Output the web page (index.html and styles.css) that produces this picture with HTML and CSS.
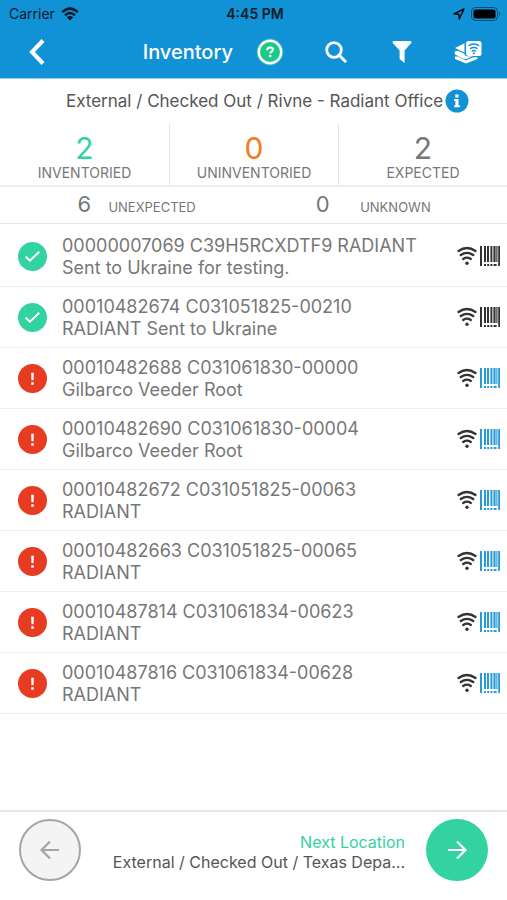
FILE: index.html
```html
<!DOCTYPE html>
<html lang="en">
<head>
<meta charset="utf-8">
<meta name="viewport" content="width=device-width, initial-scale=1">
<title>Inventory</title>
<link rel="stylesheet" href="styles.css">
</head>
<body>
<svg class="sprite" aria-hidden="true">
  <symbol id="signal" viewBox="0 0 20 20">
    <path d="M1.500 4.900Q10 -.8 18.500 4.900M3.800 9Q10 4.800 16.200 9M6.200 12.900Q10 10.400 13.800 12.900" fill="none" stroke="currentColor" stroke-width="2.400" stroke-linecap="round"/>
    <circle cx="10" cy="17.200" r="1.700" fill="currentColor"/>
  </symbol>
  <symbol id="barcode" viewBox="0 0 20 20">
    <path d="M0 0h2v20H0zM4 0h2v16H4zM7 0h2v16H7zM10.400 0h2v16h-2zM13.400 0h2.200v16h-2.200zM16.300 0h1.200v16h-1.200zM18.200 0H20v20h-1.800zM4 18h2v2H4zM7.200 18h2v2h-2zM10.400 18h2v2h-2zM13.600 18h3v2h-3z" fill="currentColor"/>
  </symbol>
  <symbol id="check" viewBox="0 0 28 28">
    <circle cx="14" cy="14" r="14" fill="#32d3a0"/>
    <path d="M7.500 14.200l4 3.800 9-8.600" fill="none" stroke="#fff" stroke-width="2"/>
  </symbol>
  <symbol id="alert" viewBox="0 0 28 28">
    <circle cx="14" cy="14" r="14" fill="#e73c22"/>
    <path d="M12.700 8.400h2.600l-.3 7.400h-2zM12.800 17.600h2.400v2.400h-2.400z" fill="#fff"/>
  </symbol>
</svg>

<header class="header">
  <div class="status">
    <span class="carrier">Carrier
      <svg width="18" height="14" viewBox="0 0 18 14"><path d="M1.2 5.2Q9 -2 16.8 5.2M4 8.2Q9 3.8 14 8.2" fill="none" stroke="currentColor" stroke-width="2.5"/><path d="M5.8 10.2Q9 7.6 12.2 10.2L9 13.4z" fill="currentColor"/></svg>
    </span>
    <span class="clock">4:45 PM</span>
    <span class="device">
      <svg width="12" height="12" viewBox="0 0 12 12"><path d="M1 5.8L11 1 6.3 11 5.8 6.2z" fill="none" stroke="currentColor" stroke-width="1.4" stroke-linejoin="round"/></svg>
      <svg width="30" height="14" viewBox="0 0 30 14"><rect x=".5" y=".5" width="26" height="13" rx="4" fill="none" stroke="currentColor" opacity=".45"/><rect x="2.5" y="2.5" width="22" height="9" rx="2" fill="currentColor"/><path d="M28 4.8q2 2.2 0 4.4z" fill="currentColor" opacity=".45"/></svg>
    </span>
  </div>
  <nav class="nav">
    <button class="nav-button" aria-label="Back"><svg width="16" height="26" viewBox="0 0 16 26"><path d="M14 1.5L3 13l11 11.5" fill="none" stroke="#fff" stroke-width="4"/></svg></button>
    <h1 class="title">Inventory</h1>
    <button class="nav-button" aria-label="Help"><svg width="30" height="30" viewBox="0 0 30 30"><circle cx="15" cy="15" r="13.5" fill="#32d3a0" opacity=".55"/><circle cx="15" cy="15" r="11.2" fill="#1cc98b" stroke="#fff" stroke-width="2.4"/><path d="M12.2 13.2q0-2.7 2.9-2.7 2.8 0 2.8 2.3 0 1.2-1.5 2-1.1.6-1.1 1.8" fill="none" stroke="#fff" stroke-width="2"/><circle cx="15.2" cy="19" r="1.3" fill="#fff"/></svg></button>
    <button class="nav-button" aria-label="Search"><svg width="22" height="22" viewBox="0 0 22 22"><circle cx="9" cy="9" r="7.3" fill="none" stroke="#fff" stroke-width="2.8"/><path d="M14 14l6.2 6.2" stroke="#fff" stroke-width="3" stroke-linecap="round"/></svg></button>
    <button class="nav-button" aria-label="Filter"><svg width="20" height="22" viewBox="0 0 20 22"><path d="M1.2 0h17.6q1.2.8.4 2L12.6 9.600V22L7.600 18V9.600L.8 2Q0 .8 1.200 0z" fill="#fff"/></svg></button>
    <button class="nav-button" aria-label="Tag layers"><svg width="28" height="24" viewBox="0 0 28 24"><path d="M10.500 3.200v9.200L1 8zM1 11.200l3-.4 6 2.700q1 3 4 2.700h5l-8 3.400L1 14.600q-1-1.800 0-3.400zM1 16.600l3-.2 7.500 4.200 8-3.400h4q.8 1.200-.8 2L12 23.600 1 19z" fill="#fff"/><rect x="12" y="1" width="15.500" height="15" rx="2.500" fill="#fff"/><path d="M14.300 5.800q5.500-3.600 11 0M16 8.700q3.800-2.400 7.600 0M17.600 11.200q2.200-1.400 4.400 0" fill="none" stroke="#1192d6" stroke-width="1.300"/><circle cx="19.800" cy="13.300" r="1" fill="#1192d6"/></svg></button>
  </nav>
</header>

<main class="main">
  <div class="location">
    <span>External / Checked Out / Rivne - Radiant Office</span>
    <button class="info" aria-label="Location details"><svg width="24" height="24" viewBox="0 0 24 24"><circle cx="12" cy="12" r="11.500" fill="#1192d6"/><path d="M10.300 5.500h3.200v2.900h-3.200zM9.200 10h4.300v6.200h1.400v2.100H9.200v-2.100h1.200v-4.100H9.200z" fill="#fff"/></svg></button>
  </div>
  <div class="stats">
    <div class="stat green"><strong>2</strong><span>INVENTORIED</span></div>
    <div class="stat orange"><strong>0</strong><span>UNINVENTORIED</span></div>
    <div class="stat"><strong>2</strong><span>EXPECTED</span></div>
  </div>
  <div class="extras">
    <strong>6</strong><span>UNEXPECTED</span>
    <strong>0</strong><span>UNKNOWN</span>
  </div>
  <ul class="items">
    <li class="item"><svg class="state"><use href="#check"/></svg><p>00000007069 C39H5RCXDTF9 RADIANT Sent to Ukraine for testing.</p><svg class="signal"><use href="#signal"/></svg><svg class="barcode"><use href="#barcode"/></svg></li>
    <li class="item"><svg class="state"><use href="#check"/></svg><p>00010482674 C031051825-00210 RADIANT Sent to Ukraine</p><svg class="signal"><use href="#signal"/></svg><svg class="barcode"><use href="#barcode"/></svg></li>
    <li class="item scanned"><svg class="state"><use href="#alert"/></svg><p>00010482688 C031061830-00000<br>Gilbarco Veeder Root</p><svg class="signal"><use href="#signal"/></svg><svg class="barcode"><use href="#barcode"/></svg></li>
    <li class="item scanned"><svg class="state"><use href="#alert"/></svg><p>00010482690 C031061830-00004<br>Gilbarco Veeder Root</p><svg class="signal"><use href="#signal"/></svg><svg class="barcode"><use href="#barcode"/></svg></li>
    <li class="item scanned"><svg class="state"><use href="#alert"/></svg><p>00010482672 C031051825-00063<br>RADIANT</p><svg class="signal"><use href="#signal"/></svg><svg class="barcode"><use href="#barcode"/></svg></li>
    <li class="item scanned"><svg class="state"><use href="#alert"/></svg><p>00010482663 C031051825-00065<br>RADIANT</p><svg class="signal"><use href="#signal"/></svg><svg class="barcode"><use href="#barcode"/></svg></li>
    <li class="item scanned"><svg class="state"><use href="#alert"/></svg><p>00010487814 C031061834-00623<br>RADIANT</p><svg class="signal"><use href="#signal"/></svg><svg class="barcode"><use href="#barcode"/></svg></li>
    <li class="item scanned"><svg class="state"><use href="#alert"/></svg><p>00010487816 C031061834-00628<br>RADIANT</p><svg class="signal"><use href="#signal"/></svg><svg class="barcode"><use href="#barcode"/></svg></li>
  </ul>
</main>

<footer class="footer">
  <button class="step previous" aria-label="Previous location"><svg width="20" height="20" viewBox="0 0 20 20"><path d="M19 10H2M10 1.500L1.500 10l8.500 8.500" fill="none" stroke="currentColor" stroke-width="2.200"/></svg></button>
  <div class="next-location"><span class="next-label">Next Location</span><span class="next-path">External / Checked Out / Texas Depa...</span></div>
  <button class="step next" aria-label="Next location"><svg width="20" height="20" viewBox="0 0 20 20"><path d="M1 10h17M10 1.500l8.500 8.500-8.500 8.500" fill="none" stroke="currentColor" stroke-width="2.200"/></svg></button>
</footer>
</body>
</html>
```

FILE: styles.css
```css
* {
  box-sizing: border-box;
}

body {
  margin: 0;
  min-height: 100vh;
  display: flex;
  flex-direction: column;
  background: #fff;
  color: #777;
  font-family: Inter, "Liberation Sans", sans-serif;
}

button {
  display: flex;
  align-items: center;
  justify-content: center;
  padding: 0;
  border: 0;
  background: none;
}

.sprite {
  display: none;
}

.header {
  background: #1192d6;
  padding-bottom: 1px;
  border-bottom: 1px solid #8bd0f2;
}

.status {
  display: grid;
  grid-template-columns: 1fr auto 1fr;
  align-items: center;
  height: 27px;
  padding: 0 6px 0 9px;
  color: #0b1a24;
  font-size: 14px;
}

.carrier,
.device {
  display: flex;
  align-items: center;
  gap: 6px;
}

.device {
  justify-content: flex-end;
  color: #000;
}

.clock {
  font-weight: 600;
}

.nav {
  display: flex;
  align-items: center;
  height: 50px;
  padding: 0 6px 0 4px;
}

.nav-button {
  width: 66px;
  height: 50px;
}

.title {
  flex: 1;
  margin: 0;
  padding-right: 4px;
  color: #fff;
  font-size: 20px;
  font-weight: 500;
  text-align: right;
}

.main {
  flex: 1;
}

.location {
  display: flex;
  align-items: center;
  justify-content: center;
  gap: 2px;
  height: 43px;
  padding-left: 28px;
  color: #555;
  font-size: 17px;
  white-space: nowrap;
}

.stats {
  display: grid;
  grid-template-columns: repeat(3, 1fr);
  margin-top: 2px;
  border-bottom: 2px solid #eee;
}

.stat {
  display: flex;
  flex-direction: column;
  align-items: center;
  height: 61px;
  padding-top: 8px;
}

.stat + .stat {
  border-left: 1px solid #e6e6e6;
}

.stat strong {
  font-size: 30px;
  font-weight: 400;
  line-height: 32px;
}

.stat span {
  font-size: 14px;
  line-height: 18px;
}

.green strong {
  color: #32d3a0;
}

.orange strong {
  color: #f47b20;
}

.extras {
  display: grid;
  grid-template-columns: 18% 24% 23% 26%;
  align-items: baseline;
  height: 37px;
  border-bottom: 1px solid #e6e6e6;
}

.extras strong {
  font-size: 22px;
  font-weight: 400;
  line-height: 34px;
  text-align: right;
}

.extras span {
  font-size: 13px;
  text-align: center;
}

.items {
  margin: 0;
  padding: 2px 0 0;
  list-style: none;
}

.item {
  display: flex;
  align-items: center;
  height: 61px;
  padding: 0 7px 0 18px;
  border-bottom: 1px solid #eee;
}

.item p {
  flex: 1;
  margin: 0 24px 0 15px;
  padding-top: 2px;
  font-size: 18px;
  line-height: 22px;
}

.state {
  width: 29px;
  height: 29px;
}

.signal,
.barcode {
  width: 20px;
  height: 20px;
  color: #333;
}

.barcode {
  margin-left: 3px;
}

.scanned .barcode {
  color: #2a9bd9;
}

.footer {
  display: flex;
  align-items: center;
  gap: 21px;
  height: 90px;
  padding: 0 19px 12px;
  border-top: 2px solid #e6e6e6;
}

.step {
  width: 62px;
  height: 62px;
  flex: none;
  border-radius: 50%;
}

.previous {
  border: 2px solid #a5a5a5;
  background: #f4f4f4;
  color: #a5a5a5;
}

.next {
  background: #32d3a0;
  color: #fff;
}

.next-location {
  display: flex;
  flex: 1;
  flex-direction: column;
  align-items: flex-end;
  padding-top: 4px;
  font-size: 16px;
  line-height: 20px;
  white-space: nowrap;
}

.next-label {
  color: #32d3a0;
}

.next-path {
  color: #555;
}
```
